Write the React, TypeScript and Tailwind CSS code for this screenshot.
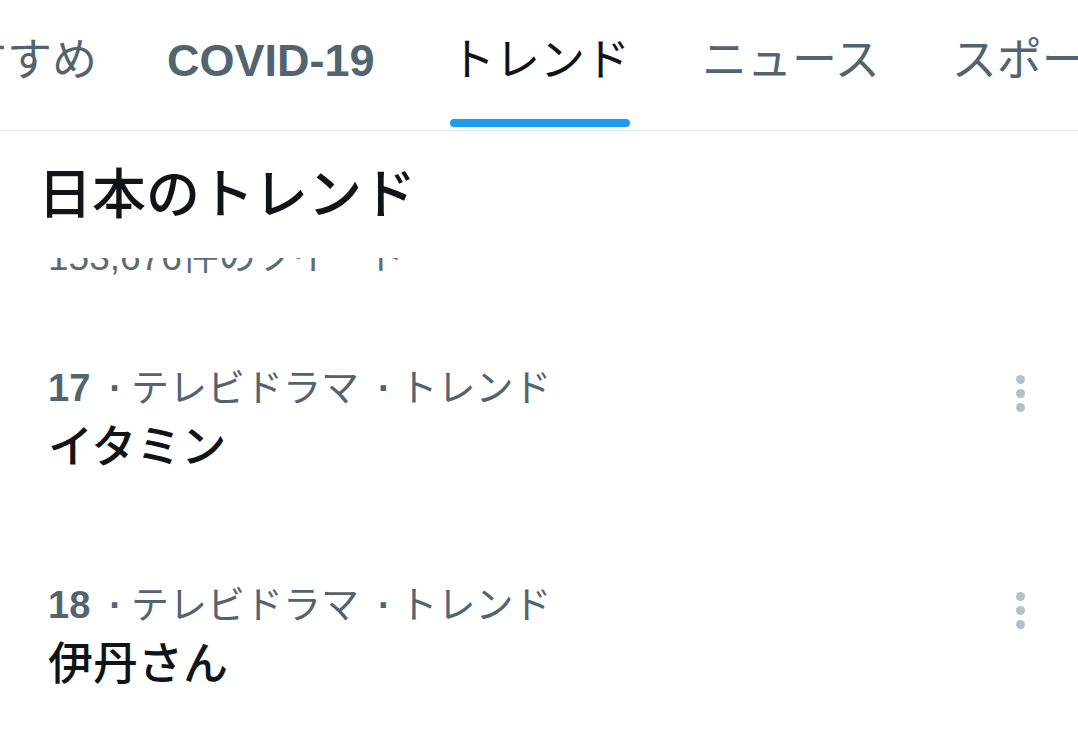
const jp = { fontFamily: '"Liberation Sans", "Noto Sans CJK JP", sans-serif' };

type Trend = { rank: number; category: string; name: string };

const trends: Trend[] = [
  { rank: 17, category: 'テレビドラマ', name: 'イタミン' },
  { rank: 18, category: 'テレビドラマ', name: '伊丹さん' },
];

function Tab({ label, active, bold, className }: { label: string; active?: boolean; bold?: boolean; className?: string }) {
  return (
    <div className={`flex flex-col shrink-0 h-full ${className ?? 'px-[36px]'}`}>
      <div
        className={`pt-[34px] text-[45px] leading-[54px] whitespace-nowrap ${bold ? 'font-bold' : 'font-normal'} ${
          active ? 'text-[#0f1419]' : 'text-[#536471]'
        }`}
      >
        {label}
      </div>
      <div className={`mt-auto mb-[3px] h-[8px] rounded-full ${active ? 'bg-[#1d9bf0]' : 'bg-transparent'}`} />
    </div>
  );
}

function MoreDots() {
  return (
    <div className="flex flex-col gap-[5px] mt-[9px] mr-[53px] shrink-0">
      <span className="block w-[9px] h-[9px] rounded-full bg-[#b3c0c8]" />
      <span className="block w-[9px] h-[9px] rounded-full bg-[#b3c0c8]" />
      <span className="block w-[9px] h-[9px] rounded-full bg-[#b3c0c8]" />
    </div>
  );
}

function Sep() {
  return <span className="font-bold ml-[19px] mr-[9px]">·</span>;
}

function TrendRow({ t }: { t: Trend }) {
  return (
    <div className="flex items-start pl-[48px] pt-[54px] pb-[54px]">
      <div className="flex-1 flex flex-col gap-[11px]">
        <div className="text-[38px] leading-[44px] text-[#536471] whitespace-nowrap">
          <span className="font-bold">{t.rank}</span>
          <Sep />
          {t.category}
          <Sep />
          トレンド
        </div>
        <div className="text-[45px] leading-[54px] font-medium text-[#0f1419]">{t.name}</div>
      </div>
      <MoreDots />
    </div>
  );
}

export default function App() {
  return (
    <div className="w-[1078px] h-[735px] overflow-hidden bg-white" style={jp}>
      {/* tab bar, scrolled so "おすすめ" is half off-screen */}
      <div className="h-[131px] border-b border-[#dfe4e8] overflow-hidden">
        <div className="flex h-full -ml-[119px]">
          <Tab label="おすすめ" />
          <Tab label="COVID-19" bold className="w-[281px] pl-[34px]" />
          <Tab label="トレンド" active />
          <Tab label="ニュース" />
          <Tab label="スポーツ" />
          <Tab label="エンタメ" />
        </div>
      </div>

      <div className="h-[127px] pt-[32px] pl-[38px]">
        <h2 className="text-[54px] leading-[64px] font-medium text-[#0f1419]">日本のトレンド</h2>
      </div>

      {/* previous trend, scrolled up under the header */}
      <div className="h-[54px] overflow-hidden pl-[48px]">
        <div className="-mt-[18px] text-[37px] leading-[36px] text-[#5b6b78]">153,676件のツイート</div>
      </div>

      {trends.map((t) => (
        <TrendRow key={t.rank} t={t} />
      ))}
    </div>
  );
}
